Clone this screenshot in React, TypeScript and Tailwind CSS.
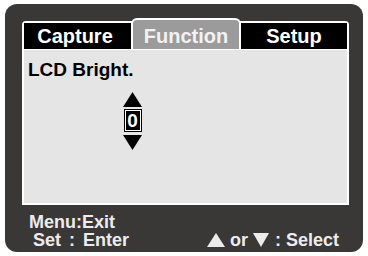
import React from 'react';

const font = { fontFamily: '"Liberation Sans", Arial, sans-serif' };

const Tri: React.FC<{ down?: boolean; className?: string; w: number; h: number }> = ({ down, className, w, h }) => (
  <svg width={w} height={h} viewBox={`0 0 ${w} ${h}`} className={className}>
    {down ? (
      <polygon points={`0,0 ${w},0 ${w / 2},${h}`} fill="currentColor" />
    ) : (
      <polygon points={`${w / 2},0 ${w},${h} 0,${h}`} fill="currentColor" />
    )}
  </svg>
);

export default function App() {
  return (
    <div className="w-[368px] h-[256px] bg-white overflow-hidden font-bold" style={font}>
      <div className="ml-[5px] mt-[4px] w-[358px] h-[248px] rounded-[12px] bg-[#3a3836] pt-[17px]">
        {/* menu panel */}
        <div className="ml-[17px] w-[327px] bg-white rounded-t-[4px] p-[2px]">
          <div className="flex items-end gap-[2px] h-[26px]">
            <div className="w-[107px] h-[26px] bg-black text-white text-[20px] leading-[26px] text-center pr-[5px]">
              Capture
            </div>
            <div className="-mx-[2px] w-[110px] h-[31px] shrink-0 bg-[#9b9b9b] border-2 border-b-0 border-white rounded-t-[6px] flex items-end justify-center">
              <span className="text-[20px] leading-[26px] text-[#f2f2f2]">Function</span>
            </div>
            <div className="flex-1 h-[26px] bg-black text-white text-[20px] leading-[26px] text-center">
              Setup
            </div>
          </div>
          <div className="mt-[1px] h-[153px] bg-[#e5e5e5] pt-[9px] pl-[4px]">
            <div className="text-[19px] leading-[22px] text-black">LCD Bright.</div>
            <div className="ml-[95px] mt-[11px] w-[19px] flex flex-col items-center text-black">
              <Tri w={19} h={15} />
              <div className="mt-[2px] w-[18px] h-[23px] bg-black p-[1px]">
                <div className="w-full h-full border border-white flex items-center justify-center text-white text-[19px] leading-none">
                  0
                </div>
              </div>
              <Tri down w={19} h={15} className="mt-[3px]" />
            </div>
          </div>
        </div>

        {/* footer hints */}
        <div className="ml-[24px] mr-[24px] mt-[8px] flex justify-between items-end text-[#ececec] text-[18px] leading-[18px]">
          <div className="flex flex-col">
            <span>Menu:Exit</span>
            <span className="ml-[4px] [word-spacing:3px]">Set : Enter</span>
          </div>
          <div className="flex items-end">
            <Tri w={18} h={14} className="mb-[2px]" />
            <span className="ml-[5px]">or</span>
            <Tri down w={16} h={14} className="ml-[5px] mb-[2px]" />
            <span className="ml-[6px]">: Select</span>
          </div>
        </div>
      </div>
    </div>
  );
}
